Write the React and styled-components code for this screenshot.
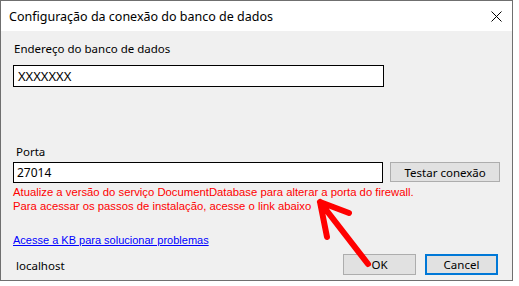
import React from "react";
import styled, { createGlobalStyle } from "styled-components";

const Global = createGlobalStyle`
  html, body {
    margin: 0;
    padding: 0;
    background: #ffffff;
  }
  body {
    width: 519px;
    height: 286px;
    overflow: hidden;
    font-family: "Liberation Sans", Arial, sans-serif;
  }
`;

const Window = styled.div`
  position: relative;
  width: 511px;
  height: 279px;
  border: 1px solid #6f6f6f;
  background: #f0f0f0;
  display: flex;
  flex-direction: column;
`;

const TitleBar = styled.div`
  height: 30px;
  background: #ffffff;
  display: flex;
  align-items: center;
  justify-content: space-between;
  padding: 0 10px 0 8px;
  font-family: "Noto Sans", "Open Sans", sans-serif;
  font-size: 12.5px;
  color: #000;
`;

const Close = styled.svg`
  width: 11px;
  height: 11px;
`;

const Body = styled.div`
  flex: 1;
  display: flex;
  flex-direction: column;
  padding: 10px 12px 0 12px;
  font-size: 11px;
  color: #000;
`;

const Label = styled.div`
  font-family: "Noto Sans", sans-serif;
  font-size: 11.5px;
  line-height: 15px;
  padding-left: ${(p) => p.$indent || 1}px;
  margin-top: ${(p) => p.$top || 0}px;
`;

const Row = styled.div`
  display: flex;
  align-items: flex-start;
  gap: 7px;
  margin-top: ${(p) => p.$top || 0}px;
`;

const Input = styled.div`
  box-sizing: border-box;
  width: 371px;
  height: ${(p) => p.$h || 21}px;
  border: 1px solid #000;
  background: #fff;
  font-family: "Noto Sans", sans-serif;
  font-size: ${(p) => p.$fs || 12}px;
  line-height: ${(p) => (p.$h || 21) - 2}px;
  padding-left: ${(p) => p.$pl || 3}px;
`;

const Button = styled.div`
  box-sizing: border-box;
  width: ${(p) => p.$w || 73}px;
  height: ${(p) => p.$h || 21}px;
  border: ${(p) => (p.$primary ? "2px solid #0078d7" : "1px solid #adadad")};
  background: #e1e1e1;
  display: flex;
  align-items: center;
  justify-content: center;
  font-family: "Noto Sans", sans-serif;
  font-size: 11.5px;
  color: #000;
`;

const Warning = styled.div`
  color: #ff0000;
  font-size: 11.3px;
  line-height: 14px;
  margin-top: ${(p) => p.$top || 0}px;
  white-space: nowrap;
`;

const Link = styled.a`
  color: #0000ff;
  text-decoration: underline;
  font-size: 11px;
  line-height: 14px;
  margin-top: 20px;
  align-self: flex-start;
`;

const Footer = styled.div`
  display: flex;
  justify-content: space-between;
  align-items: center;
  margin-top: 7px;
`;

const Host = styled.div`
  font-family: "Noto Sans", sans-serif;
  font-size: 11.5px;
  padding-left: 3px;
  padding-top: 2px;
`;

const Buttons = styled.div`
  display: flex;
  gap: 9px;
  padding-right: 2px;
`;

const Arrow = styled.svg`
  position: absolute;
  left: 300px;
  top: 190px;
  width: 90px;
  height: 90px;
  pointer-events: none;
`;

export default function App() {
  return (
    <>
      <Global />
      <Window>
        <TitleBar>
          <span>Configuração da conexão do banco de dados</span>
          <Close viewBox="0 0 11 11">
            <path d="M0.5 0.5 L10.5 10.5 M10.5 0.5 L0.5 10.5" stroke="#000" strokeWidth="1" fill="none" />
          </Close>
        </TitleBar>
        <Body>
          <Label>Endereço do banco de dados</Label>
          <Row $top={9}>
            <Input $h={22} $fs={13} $pl={4}>XXXXXXX</Input>
          </Row>
          <Label $top={57} $indent={3}>Porta</Label>
          <Row $top={3}>
            <Input>27014</Input>
            <Button $w={110} $h={20}>Testar conexão</Button>
          </Row>
          <Warning $top={2}>
            Atualize a versão do serviço DocumentDatabase para alterar a porta do firewall.
          </Warning>
          <Warning>Para acessar os passos de instalação, acesse o link abaixo</Warning>
          <Link>Acesse a KB para solucionar problemas</Link>
          <Footer>
            <Host>localhost</Host>
            <Buttons>
              <Button $w={73} $h={21}>OK</Button>
              <Button $w={73} $h={21} $primary>Cancel</Button>
            </Buttons>
          </Footer>
        </Body>
        <Arrow viewBox="300 190 90 90">
          <path
            d="M367 263 L319 201 M319 201 L348 212 M319 201 L326 236"
            stroke="#ff0000"
            strokeWidth="6"
            strokeLinecap="round"
            strokeLinejoin="round"
            fill="none"
          />
        </Arrow>
      </Window>
    </>
  );
}
